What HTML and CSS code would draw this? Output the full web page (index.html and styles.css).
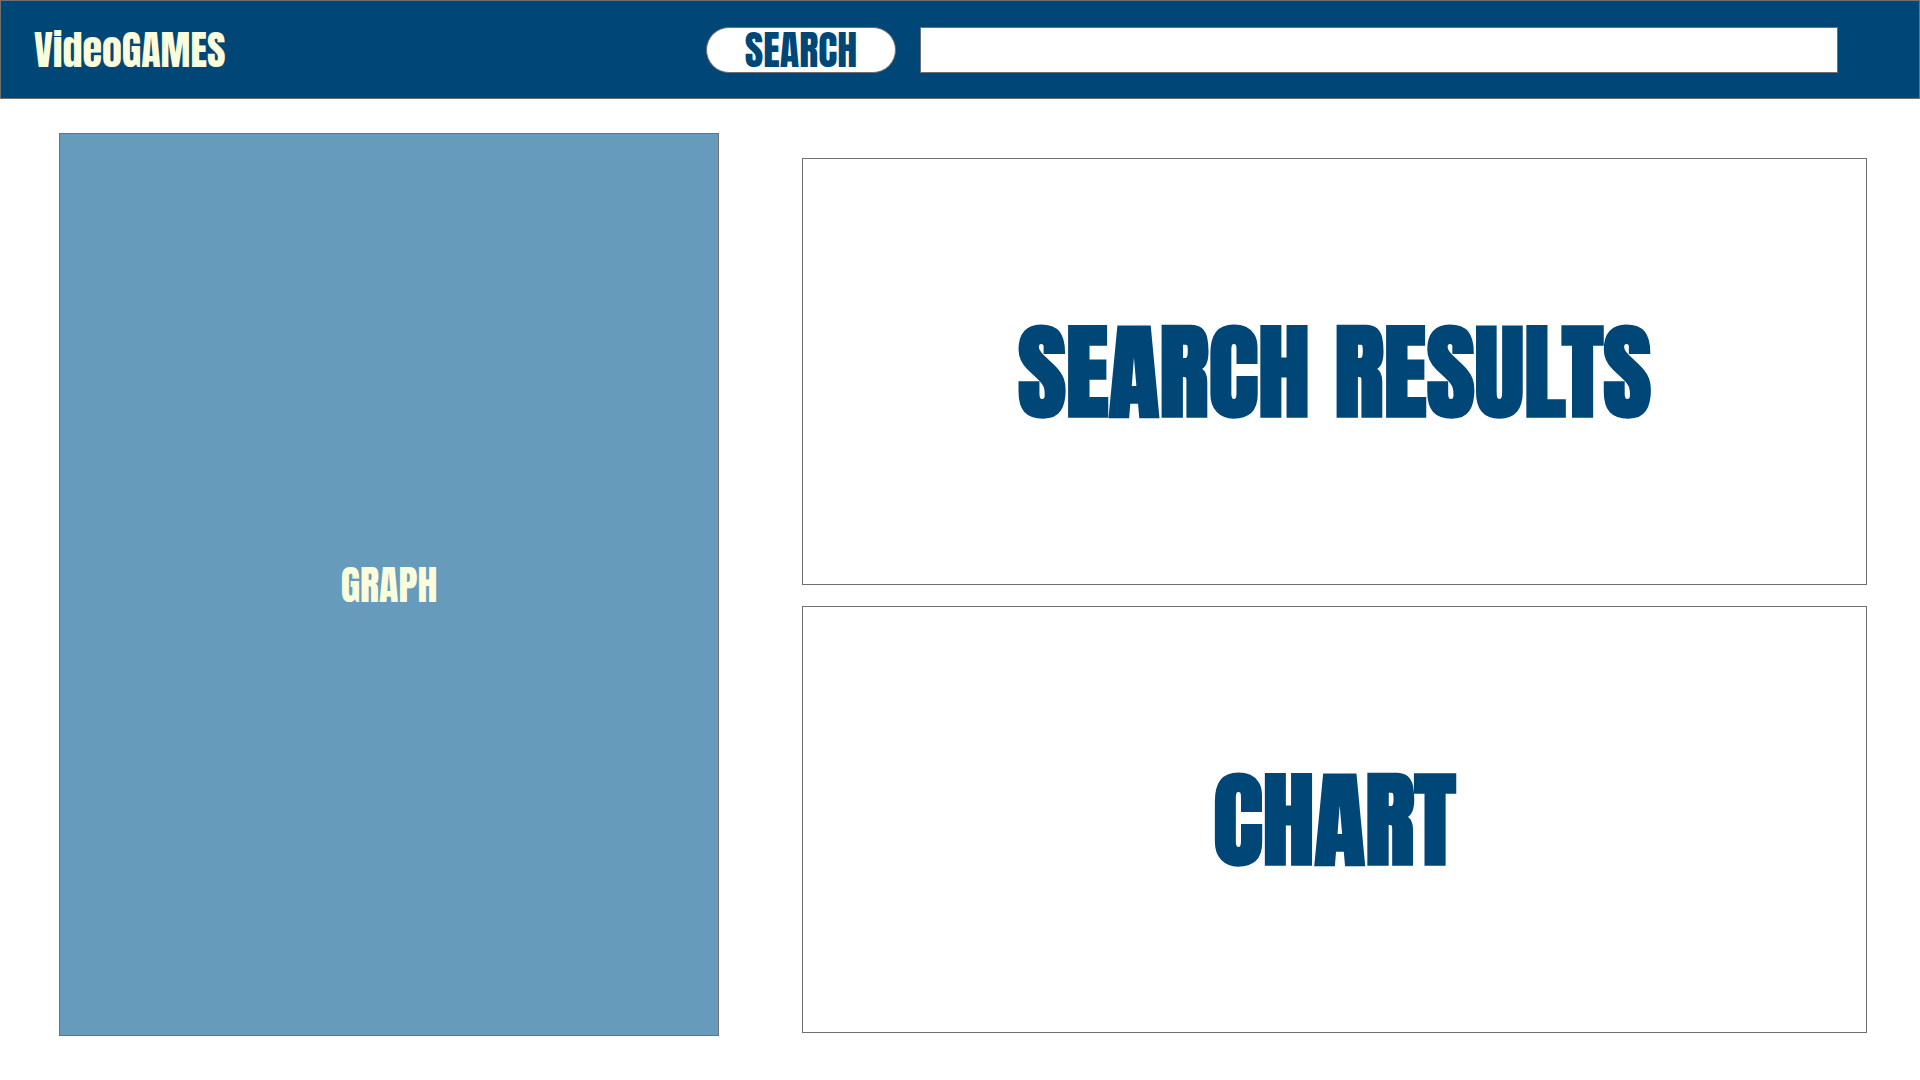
FILE: index.html
```html
<!DOCTYPE html>
<html lang="en">
<head>
  <meta charset="utf-8">
  <meta name="viewport" content="width=device-width, initial-scale=1">
  <title>VideoGAMES</title>
  <link rel="stylesheet" href="styles.css">
</head>
<body>
  <header class="topbar">
    <a class="brand" href="#">VideoGAMES</a>
    <form class="search" role="search">
      <button class="search-button" type="submit">SEARCH</button>
      <input class="search-input" type="search" name="q" aria-label="Search video games">
    </form>
  </header>
  <main class="content">
    <section class="panel graph">
      <h2 class="graph-title">GRAPH</h2>
    </section>
    <div class="side">
      <section class="panel">
        <h2 class="panel-title">SEARCH RESULTS</h2>
      </section>
      <section class="panel">
        <h2 class="panel-title">CHART</h2>
      </section>
    </div>
  </main>
</body>
</html>
```
FILE: styles.css
```css
:root {
  --navy: #004777;
  --blue: #669bbc;
  --cream: #fafddb;
  --line: #707070;
  --display: Impact, Anton, "Roboto Condensed", Roboto, sans-serif;
}

* {
  box-sizing: border-box;
}

body {
  display: flex;
  flex-direction: column;
  min-height: 100vh;
  margin: 0;
  background: #fff;
  color: var(--navy);
  font-family: var(--display);
  font-weight: 400;
}

.topbar {
  display: flex;
  align-items: center;
  justify-content: space-between;
  gap: 32px;
  padding: 26px 81px 25px 33px;
  border: 1px solid var(--line);
  background: var(--navy);
}

.brand {
  color: var(--cream);
  font-size: 40px;
  line-height: 46px;
  text-decoration: none;
}

.search {
  display: flex;
  flex: 0 1 1132px;
  gap: 24px;
}

.search-button {
  width: 190px;
  height: 46px;
  padding: 0;
  border: 1px solid var(--line);
  border-radius: 23px;
  background: #fff;
  color: var(--navy);
  font: inherit;
  font-size: 40px;
  line-height: 44px;
}

.search-input {
  flex: 1;
  min-width: 0;
  height: 46px;
  padding: 0 12px;
  border: 1px solid var(--line);
  border-radius: 0;
  background: #fff;
  color: var(--navy);
  font: 24px Roboto, sans-serif;
  appearance: none;
}

.content {
  display: grid;
  flex: 1;
  grid-template-columns: 660fr 1065fr;
  gap: 83px;
  padding: 34px 53px 44px 59px;
}

.side {
  display: grid;
  grid-template-rows: 1fr 1fr;
  gap: 21px;
  padding: 25px 0 3px;
}

.panel {
  display: flex;
  align-items: center;
  justify-content: center;
  border: 1px solid var(--line);
}

.graph {
  background: var(--blue);
  color: var(--cream);
}

.graph-title {
  margin: 0;
  font-size: 40px;
  font-weight: 400;
  line-height: 48px;
}

.panel-title {
  margin: 0;
  font-size: 104px;
  font-weight: 700;
  line-height: 120px;
}
```
